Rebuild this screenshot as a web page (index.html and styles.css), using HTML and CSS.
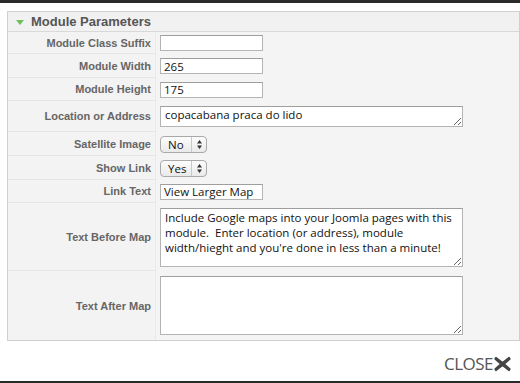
FILE: index.html
```html
<!DOCTYPE html>
<html lang="en">
<head>
  <meta charset="UTF-8" />
  <title>Module Parameters</title>
  <link rel="stylesheet" href="styles.css">
</head>
<body>
  <div class="modal">
    <div class="panel">
      <div class="panel-head">
        <span class="toggle"></span>
        <h3>Module Parameters</h3>
      </div>

      <div class="row h21">
        <label class="label">Module Class Suffix</label>
        <div class="field"><input type="text" class="text" value=""></div>
      </div>
      <div class="row h23">
        <label class="label">Module Width</label>
        <div class="field"><input type="text" class="text" value="265"></div>
      </div>
      <div class="row h22">
        <label class="label">Module Height</label>
        <div class="field"><input type="text" class="text" value="175"></div>
      </div>
      <div class="row h30">
        <label class="label">Location or Address</label>
        <div class="field"><textarea class="area short">copacabana praca do lido</textarea></div>
      </div>
      <div class="row h23">
        <label class="label">Satellite Image</label>
        <div class="field">
          <div class="select"><span class="val">No</span><span class="arrows"><svg width="5" height="9" viewBox="0 0 5 9"><path d="M2.5 0L5 3.5H0Z M2.5 9L5 5.5H0Z" fill="#333"/></svg></span></div>
        </div>
      </div>
      <div class="row h23">
        <label class="label">Show Link</label>
        <div class="field">
          <div class="select"><span class="val">Yes</span><span class="arrows"><svg width="5" height="9" viewBox="0 0 5 9"><path d="M2.5 0L5 3.5H0Z M2.5 9L5 5.5H0Z" fill="#333"/></svg></span></div>
        </div>
      </div>
      <div class="row h22">
        <label class="label">Link Text</label>
        <div class="field"><input type="text" class="text" value="View Larger Map"></div>
      </div>
      <div class="row h67">
        <label class="label">Text Before Map</label>
        <div class="field"><textarea class="area big">Include Google maps into your Joomla pages with this module.  Enter location (or address), module width/hieght and you're done in less than a minute!</textarea></div>
      </div>
      <div class="row h69 last">
        <label class="label">Text After Map</label>
        <div class="field"><textarea class="area big"></textarea></div>
      </div>
    </div>

    <div class="close">
      <span>CLOSE</span>
      <svg width="17" height="16" viewBox="0 0 17 16"><path d="M2 1.5L8.5 6.5L15 1.5L16 3L10.3 8L16 13L15 14.5L8.5 9.5L2 14.5L1 13L6.7 8L1 3Z" fill="#444" stroke="#444" stroke-width="1.4" stroke-linejoin="round"/></svg>
    </div>
  </div>
</body>
</html>
```

FILE: styles.css
```css
* { box-sizing: border-box; }

html, body {
  margin: 0;
  padding: 0;
  background: #fff;
}

body {
  height: 383px;
  overflow: hidden;
  border-top: 3px solid #2b2b2b;
  border-bottom: 2px solid #2b2b2b;
  font-family: "Liberation Sans", Arial, sans-serif;
}

.modal {
  display: flex;
  flex-direction: column;
  height: 378px;
  padding: 8px 0 0 7px;
}

.panel {
  width: 513px;
  border: 1px solid #cfcfcf;
  background: #f4f4f4;
}

.panel-head {
  display: flex;
  align-items: center;
  height: 20px;
  padding-left: 8px;
  background: #f1f1f1;
  border-bottom: 1px solid #d9d9d9;
}

.toggle {
  width: 0;
  height: 0;
  border-left: 4px solid transparent;
  border-right: 4px solid transparent;
  border-top: 5px solid #6fbf5b;
  margin-right: 7px;
  margin-top: 1px;
}

.panel-head h3 {
  margin: 0;
  font-size: 13px;
  font-weight: bold;
  color: #555;
}

.row {
  display: flex;
}

.h21 { height: 22px; }
.h22 { height: 23px; }
.h23 { height: 24px; }
.h30 { height: 31px; }
.h67 { height: 68px; }
.h69 { height: 69px; }

.label {
  width: 148px;
  display: flex;
  align-items: center;
  justify-content: flex-end;
  padding-right: 4px;
  font-size: 11px;
  font-weight: bold;
  color: #666;
  background: #f3f3f3;
  border-right: 1px solid #e9e9e9;
  border-bottom: 1px solid #e6e6e6;
}

.last .label { border-bottom: none; }

.field {
  display: flex;
  align-items: center;
  padding-left: 4px;
}

.text, .area {
  font-family: "Open Sans", "DejaVu Sans", sans-serif;
  font-size: 11.5px;
  color: #111;
  background: #fff;
  border: 1px solid #b4b4b4;
  border-top-color: #9e9e9e;
  border-radius: 0;
  outline: none;
  margin: 0;
}

.text {
  width: 103px;
  height: 16px;
  padding: 0 3px;
}

.area {
  width: 303px;
  padding: 0 4px;
  line-height: 15px;
  resize: vertical;
}

.area.short { height: 21px; }
.area.big { height: 59px; padding-top: 1px; }

.select {
  display: flex;
  align-items: center;
  width: 47px;
  height: 17px;
  border: 1px solid #a9a9a9;
  border-radius: 4px;
  background: linear-gradient(#fdfdfd, #e9e9e9);
  font-family: "Open Sans", "DejaVu Sans", sans-serif;
  font-size: 11.5px;
  color: #111;
}

.select .val {
  flex: 1;
  padding-left: 7px;
}

.select .arrows {
  display: flex;
  align-items: center;
  justify-content: center;
  width: 15px;
  height: 100%;
  border-left: 1px solid #c9c9c9;
}

.close {
  display: flex;
  align-items: center;
  justify-content: flex-end;
  gap: 1px;
  margin-top: 11px;
  padding-right: 9px;
  font-family: "Open Sans", "DejaVu Sans", sans-serif;
  font-size: 17px;
  color: #555;
  letter-spacing: -0.5px;
}
```
